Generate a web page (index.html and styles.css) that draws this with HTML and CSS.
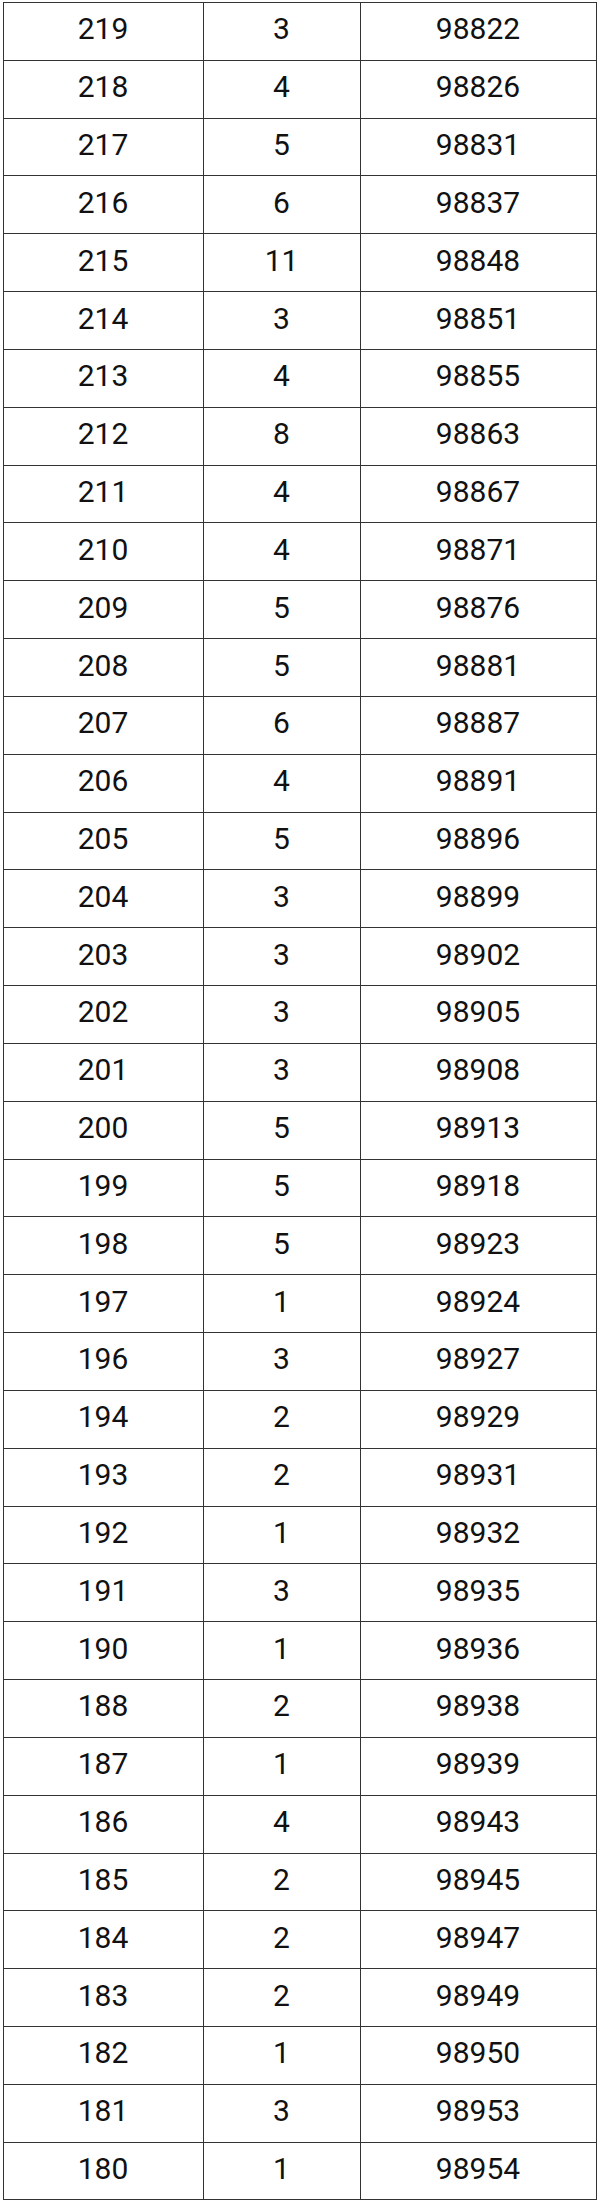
FILE: index.html
```html
<!DOCTYPE html>
<html>
<head>
<meta charset="utf-8">
<link rel="stylesheet" href="styles.css">
</head>
<body>
<table class="grid">
<colgroup><col class="c1"><col class="c2"><col class="c3"></colgroup>
<tbody>
<tr><td>219</td><td>3</td><td>98822</td></tr>
<tr><td>218</td><td>4</td><td>98826</td></tr>
<tr><td>217</td><td>5</td><td>98831</td></tr>
<tr><td>216</td><td>6</td><td>98837</td></tr>
<tr><td>215</td><td>11</td><td>98848</td></tr>
<tr><td>214</td><td>3</td><td>98851</td></tr>
<tr><td>213</td><td>4</td><td>98855</td></tr>
<tr><td>212</td><td>8</td><td>98863</td></tr>
<tr><td>211</td><td>4</td><td>98867</td></tr>
<tr><td>210</td><td>4</td><td>98871</td></tr>
<tr><td>209</td><td>5</td><td>98876</td></tr>
<tr><td>208</td><td>5</td><td>98881</td></tr>
<tr><td>207</td><td>6</td><td>98887</td></tr>
<tr><td>206</td><td>4</td><td>98891</td></tr>
<tr><td>205</td><td>5</td><td>98896</td></tr>
<tr><td>204</td><td>3</td><td>98899</td></tr>
<tr><td>203</td><td>3</td><td>98902</td></tr>
<tr><td>202</td><td>3</td><td>98905</td></tr>
<tr><td>201</td><td>3</td><td>98908</td></tr>
<tr><td>200</td><td>5</td><td>98913</td></tr>
<tr><td>199</td><td>5</td><td>98918</td></tr>
<tr><td>198</td><td>5</td><td>98923</td></tr>
<tr><td>197</td><td>1</td><td>98924</td></tr>
<tr><td>196</td><td>3</td><td>98927</td></tr>
<tr><td>194</td><td>2</td><td>98929</td></tr>
<tr><td>193</td><td>2</td><td>98931</td></tr>
<tr><td>192</td><td>1</td><td>98932</td></tr>
<tr><td>191</td><td>3</td><td>98935</td></tr>
<tr><td>190</td><td>1</td><td>98936</td></tr>
<tr><td>188</td><td>2</td><td>98938</td></tr>
<tr><td>187</td><td>1</td><td>98939</td></tr>
<tr><td>186</td><td>4</td><td>98943</td></tr>
<tr><td>185</td><td>2</td><td>98945</td></tr>
<tr><td>184</td><td>2</td><td>98947</td></tr>
<tr><td>183</td><td>2</td><td>98949</td></tr>
<tr><td>182</td><td>1</td><td>98950</td></tr>
<tr><td>181</td><td>3</td><td>98953</td></tr>
<tr><td>180</td><td>1</td><td>98954</td></tr>
</tbody>
</table>
</body>
</html>
```
FILE: styles.css
```css
html, body {
  margin: 0;
  padding: 0;
  background: #ffffff;
}
body {
  padding: 2px 0 0 2.5px;
}
.grid {
  border-collapse: collapse;
  table-layout: fixed;
  width: 593px;
  font-family: Roboto, "Liberation Sans", sans-serif;
  font-size: 30px;
  color: #111111;
}
.c1 { width: 200px; }
.c2 { width: 157px; }
.c3 { width: 236px; }
.grid tr {
  height: 57.84px;
}
.grid td {
  border: 1.5px solid #333333;
  text-align: center;
  vertical-align: middle;
  padding: 0 0 4px 0;
  line-height: 1;
}
```
